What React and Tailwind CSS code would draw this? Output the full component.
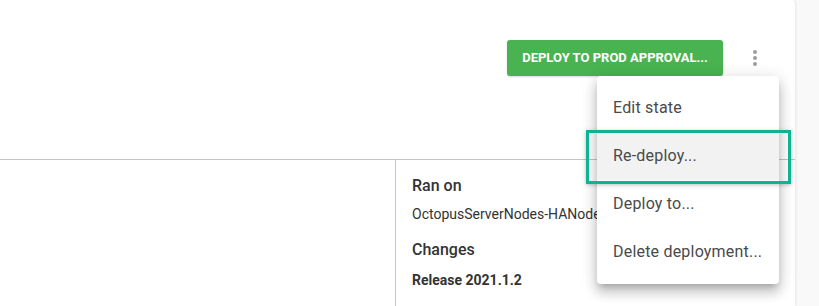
import React from "react";

export default function App() {
  const font = { fontFamily: "Roboto, 'Noto Sans', sans-serif" };
  const item =
    "h-[48px] flex items-center px-[16px] text-[16px] leading-[24px] tracking-[0.2px] whitespace-nowrap text-[#4a4a4a]";
  return (
    <div
      className="relative w-[819px] h-[306px] bg-[#f9f9f9] flex overflow-hidden"
      style={font}
    >
      <div className="w-[795px] h-full bg-white rounded-tr-[4px] shadow-[1px_0_3px_rgba(0,0,0,0.08)] flex flex-col">
        <div className="h-[160px] border-b border-[#c4c4c4] flex justify-end items-start pt-[40px] pr-[16px]">
          <button className="h-[36px] w-[216px] bg-[#48b350] rounded-[3px] text-white text-[13px] font-bold uppercase shadow-[0_1px_2px_rgba(0,0,0,0.15)] flex items-center justify-center">
            Deploy to Prod Approval...
          </button>
          <div className="ml-[8px] w-[48px] h-[36px] flex flex-col items-center justify-center gap-[2px]">
            <span className="block w-[4px] h-[4px] rounded-full bg-[#9e9e9e]" />
            <span className="block w-[4px] h-[4px] rounded-full bg-[#9e9e9e]" />
            <span className="block w-[4px] h-[4px] rounded-full bg-[#9e9e9e]" />
          </div>
        </div>
        <div className="flex-1 flex">
          <div className="w-[396px] border-r border-[#c4c4c4]" />
          <div className="flex-1 pl-[16px] pt-[14px] overflow-hidden">
            <div className="text-[16px] leading-[24px] font-medium text-[#333333]">Ran on</div>
            <div className="mt-[6px] text-[14px] leading-[20px] text-[#333333] whitespace-nowrap">
              OctopusServerNodes-HANode-01
            </div>
            <div className="mt-[14px] text-[16px] leading-[24px] font-medium text-[#333333]">Changes</div>
            <div className="mt-[8px] text-[14px] leading-[20px] font-bold text-[#333333]">Release 2021.1.2</div>
          </div>
        </div>
      </div>

      <div className="absolute left-[597px] top-[76px] w-[182px] bg-white rounded-[4px] py-[8px] shadow-[0_5px_6px_-3px_rgba(0,0,0,0.2),0_9px_12px_1px_rgba(0,0,0,0.14),0_3px_16px_2px_rgba(0,0,0,0.12)]">
        <div className={item}>Edit state</div>
        <div className={item + " bg-[#f2f2f2]"}>Re-deploy...</div>
        <div className={item}>Deploy to...</div>
        <div className={item}>Delete deployment...</div>
      </div>

      <div className="absolute left-[586px] top-[130px] w-[205px] h-[54px] border-[3px] border-[#0fb394] shadow-[0_1px_4px_rgba(0,0,0,0.25)]" />
    </div>
  );
}
